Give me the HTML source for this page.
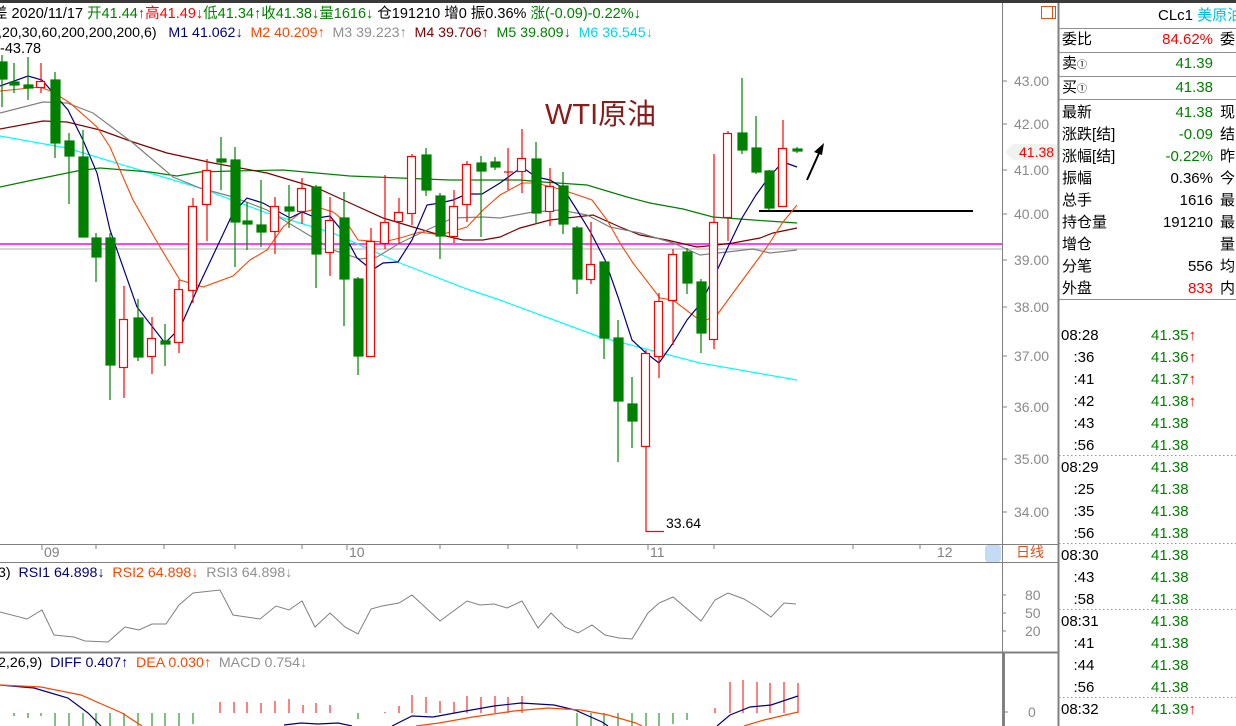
<!DOCTYPE html>
<html><head><meta charset="utf-8"><style>
body{margin:0;width:1236px;height:726px;overflow:hidden;background:#fff;font-family:"Liberation Sans","Noto Sans CJK SC",sans-serif;position:relative}
.t{position:absolute;white-space:nowrap;font-size:13px;line-height:15px}
.h{font-size:14.5px;line-height:16px}
.r{position:absolute;font-size:15px;line-height:18px;white-space:nowrap}
.g{color:#008000}.rd{color:#f00}.k{color:#000}
.ax{position:absolute;font-size:14px;color:#8a8a8a;left:1014px}
</style></head><body>
<svg width="1236" height="726" style="position:absolute;left:0;top:0" xmlns="http://www.w3.org/2000/svg">
<rect x="0" y="0" width="1236" height="3" fill="#3a3a3a"/>
<line x1="1002.5" y1="3" x2="1002.5" y2="726" stroke="#808080"/>
<line x1="1058.5" y1="3" x2="1058.5" y2="726" stroke="#808080" stroke-width="2"/>
<line x1="0" y1="544.5" x2="1058" y2="544.5" stroke="#808080"/>
<line x1="0" y1="562.5" x2="1058" y2="562.5" stroke="#808080"/>
<line x1="0" y1="652.5" x2="1058" y2="652.5" stroke="#808080" stroke-width="2"/>
<line x1="1004" y1="653" x2="1004" y2="726" stroke="#808080" stroke-width="2"/>
<g stroke="#909090"><line x1="1059" y1="28.5" x2="1236" y2="28.5"/><line x1="1059" y1="52.5" x2="1236" y2="52.5"/><line x1="1059" y1="76.5" x2="1236" y2="76.5"/><line x1="1059" y1="99.5" x2="1236" y2="99.5"/><line x1="1059" y1="299.5" x2="1236" y2="299.5"/></g>
<g stroke="#999" stroke-dasharray="1.5,2.5"><line x1="1059" y1="455.5" x2="1236" y2="455.5"/><line x1="1059" y1="543.5" x2="1236" y2="543.5"/><line x1="1059" y1="609.5" x2="1236" y2="609.5"/><line x1="1059" y1="697.5" x2="1236" y2="697.5"/></g>
<rect x="1041.5" y="6.5" width="14" height="12" fill="none" stroke="#e0501a"/><line x1="1052.5" y1="6" x2="1052.5" y2="19" stroke="#e0501a"/>
<g stroke="#808080"><line x1="1003" y1="81" x2="1007" y2="81"/><line x1="1003" y1="124" x2="1007" y2="124"/><line x1="1003" y1="170" x2="1007" y2="170"/><line x1="1003" y1="214" x2="1007" y2="214"/><line x1="1003" y1="260" x2="1007" y2="260"/><line x1="1003" y1="307" x2="1007" y2="307"/><line x1="1003" y1="356" x2="1007" y2="356"/><line x1="1003" y1="407" x2="1007" y2="407"/><line x1="1003" y1="459" x2="1007" y2="459"/><line x1="1003" y1="512" x2="1007" y2="512"/>
<line x1="1003" y1="595" x2="1006" y2="595"/><line x1="1003" y1="613" x2="1006" y2="613"/><line x1="1003" y1="631" x2="1006" y2="631"/><line x1="1005" y1="712" x2="1008" y2="712"/>
<line x1="42" y1="545" x2="42" y2="550"/><line x1="96" y1="545" x2="96" y2="549"/><line x1="164" y1="545" x2="164" y2="549"/><line x1="235" y1="545" x2="235" y2="549"/><line x1="302" y1="545" x2="302" y2="549"/><line x1="347" y1="545" x2="347" y2="550"/><line x1="440" y1="545" x2="440" y2="549"/><line x1="508" y1="545" x2="508" y2="549"/><line x1="577" y1="545" x2="577" y2="549"/><line x1="648" y1="545" x2="648" y2="550"/><line x1="714" y1="545" x2="714" y2="549"/><line x1="853" y1="545" x2="853" y2="549"/><line x1="920" y1="545" x2="920" y2="549"/></g>
<rect x="985" y="545" width="16" height="17" rx="3" fill="#c5dbf5"/>
<polygon points="1005,152 1013,144 1057,144 1057,160 1013,160" fill="#eef3ee"/>
<line x1="0" y1="249" x2="1002" y2="249" stroke="#c8c8c8" stroke-width="1.5"/>
<line x1="0" y1="244" x2="1002" y2="244" stroke="#ff00ff" stroke-width="1.5"/>
<line x1="759" y1="211" x2="973" y2="211" stroke="#000" stroke-width="2"/>
<line x1="807" y1="180" x2="820" y2="151" stroke="#000" stroke-width="2"/><polygon points="824,143 814,152 822,155" fill="#000"/>
<polyline fill="none" stroke="#00ffff" stroke-width="1.2" points="0,136 67,148 133,168 200,188 267,213 333,233 400,263 467,289 500,300 600,337 700,363 797,380"/>
<polyline fill="none" stroke="#008000" stroke-width="1.2" points="0,187 33,180 77,171 100,168 150,172 177,176 200,172 233,171 283,170 350,176 400,178 450,180 500,180 520,180 543,182 587,185 627,197 650,203 683,209 713,217 753,220 797,223"/>
<polyline fill="none" stroke="#800000" stroke-width="1.2" points="0,129 43,121 67,122 100,130 133,142 167,153 213,163 267,173 317,188 350,203 383,218 433,233 463,240 483,240 500,237 520,228 550,220 593,215 620,227 640,235 667,240 697,247 717,245 733,243 760,238 773,233 797,228"/>
<polyline fill="none" stroke="#808080" stroke-width="1.2" points="0,113 43,102 67,103 93,113 133,143 173,177 200,188 233,197 267,210 317,240 333,250 360,259 377,257 400,243 427,230 453,218 483,217 500,218 533,212 560,210 587,215 610,227 640,233 673,243 700,255 727,252 753,249 770,253 797,250"/>
<polyline fill="none" stroke="#ff4500" stroke-width="1.1" points="0,91 40,87 53,92 70,103 97,127 110,147 133,200 160,247 180,280 203,287 233,276 250,260 267,250 283,227 300,213 320,208 333,212 347,223 358,240 383,242 400,238 420,232 440,235 467,227 483,210 500,195 522,183 536,183 563,190 592,200 607,220 620,243 633,263 660,298 673,300 702,322 717,315 733,293 750,270 767,247 783,222 797,205"/>
<polyline fill="none" stroke="#000080" stroke-width="1.2" points="0,86 28,76 42,80 68,110 83,140 97,173 110,230 137,307 165,343 180,328 200,283 217,247 233,213 247,198 263,203 290,218 302,212 317,218 330,216 343,232 357,258 372,270 383,263 398,262 412,240 427,205 440,203 453,200 467,194 482,194 500,183 522,167 536,177 550,180 563,188 577,210 591,233 605,260 618,297 632,340 646,353 659,363 673,343 687,320 701,303 714,277 728,247 742,218 756,195 769,177 783,162 797,167"/>
<g stroke-width="1.2">
<g stroke="#008000" fill="#008000">
<line x1="2" y1="55" x2="2" y2="107"/><rect x="-2" y="62" width="9" height="17"/>
<line x1="14" y1="63" x2="14" y2="93"/><rect x="10" y="82" width="9" height="3"/>
<line x1="28" y1="57" x2="28" y2="100"/><rect x="24" y="85" width="9" height="3"/>
<line x1="55" y1="72" x2="55" y2="158"/><rect x="51" y="80" width="9" height="63"/>
<line x1="69" y1="133" x2="69" y2="204"/><rect x="65" y="141" width="9" height="15"/>
<line x1="83" y1="130" x2="83" y2="237"/><rect x="79" y="157" width="9" height="80"/>
<line x1="96" y1="233" x2="96" y2="282"/><rect x="92" y="238" width="9" height="19"/>
<line x1="110" y1="233" x2="110" y2="400"/><rect x="106" y="238" width="9" height="127"/>
<line x1="138" y1="299" x2="138" y2="361"/><rect x="134" y="318" width="9" height="39"/>
<line x1="165" y1="324" x2="165" y2="366"/><rect x="161" y="341" width="9" height="3"/>
<line x1="221" y1="137" x2="221" y2="190"/><rect x="217" y="159" width="9" height="3"/>
<line x1="235" y1="147" x2="235" y2="267"/><rect x="231" y="160" width="9" height="62"/>
<line x1="247" y1="202" x2="247" y2="250"/><rect x="243" y="221" width="9" height="3"/>
<line x1="261" y1="180" x2="261" y2="247"/><rect x="257" y="225" width="9" height="7"/>
<line x1="289" y1="185" x2="289" y2="228"/><rect x="285" y="207" width="9" height="4"/>
<line x1="316" y1="185" x2="316" y2="288"/><rect x="312" y="187" width="9" height="67"/>
<line x1="344" y1="192" x2="344" y2="326"/><rect x="340" y="218" width="9" height="61"/>
<line x1="358" y1="277" x2="358" y2="375"/><rect x="354" y="279" width="9" height="77"/>
<line x1="426" y1="148" x2="426" y2="196"/><rect x="422" y="155" width="9" height="35"/>
<line x1="440" y1="193" x2="440" y2="259"/><rect x="436" y="196" width="9" height="40"/>
<line x1="481" y1="156" x2="481" y2="237"/><rect x="477" y="163" width="9" height="8"/>
<line x1="495" y1="157" x2="495" y2="170"/><rect x="491" y="162" width="9" height="5"/>
<line x1="536" y1="142" x2="536" y2="224"/><rect x="532" y="159" width="9" height="54"/>
<line x1="563" y1="172" x2="563" y2="234"/><rect x="559" y="186" width="9" height="38"/>
<line x1="577" y1="226" x2="577" y2="294"/><rect x="573" y="228" width="9" height="51"/>
<line x1="604" y1="262" x2="604" y2="359"/><rect x="600" y="262" width="9" height="76"/>
<line x1="618" y1="320" x2="618" y2="462"/><rect x="614" y="338" width="9" height="63"/>
<line x1="632" y1="377" x2="632" y2="448"/><rect x="628" y="404" width="9" height="17"/>
<line x1="687" y1="248" x2="687" y2="294"/><rect x="683" y="252" width="9" height="31"/>
<line x1="701" y1="279" x2="701" y2="353"/><rect x="697" y="282" width="9" height="51"/>
<line x1="742" y1="78" x2="742" y2="154"/><rect x="738" y="133" width="9" height="17"/>
<line x1="756" y1="116" x2="756" y2="174"/><rect x="752" y="148" width="9" height="24"/>
<line x1="769" y1="170" x2="769" y2="210"/><rect x="765" y="171" width="9" height="37"/>
<line x1="797" y1="147" x2="797" y2="153"/><rect x="793" y="149" width="9" height="2"/>
</g>
<g stroke="#ff0000" fill="#fff">
<line x1="41" y1="63" x2="41" y2="93"/><rect x="36.5" y="81.5" width="8" height="6"/>
<line x1="124" y1="286" x2="124" y2="398"/><rect x="119.5" y="319.5" width="8" height="48"/>
<line x1="152" y1="317" x2="152" y2="374"/><rect x="147.5" y="338.5" width="8" height="18"/>
<line x1="179" y1="280" x2="179" y2="353"/><rect x="174.5" y="289.5" width="8" height="53"/>
<line x1="193" y1="198" x2="193" y2="303"/><rect x="188.5" y="206.5" width="8" height="84"/>
<line x1="207" y1="159" x2="207" y2="241"/><rect x="202.5" y="170.5" width="8" height="34"/>
<line x1="275" y1="197" x2="275" y2="254"/><rect x="270.5" y="206.5" width="8" height="25"/>
<line x1="302" y1="178" x2="302" y2="224"/><rect x="297.5" y="188.5" width="8" height="23"/>
<line x1="330" y1="197" x2="330" y2="276"/><rect x="325.5" y="220.5" width="8" height="32"/>
<line x1="371" y1="228" x2="371" y2="356"/><rect x="366.5" y="241.5" width="8" height="115"/>
<line x1="385" y1="175" x2="385" y2="249"/><rect x="380.5" y="222.5" width="8" height="21"/>
<line x1="399" y1="198" x2="399" y2="244"/><rect x="394.5" y="212.5" width="8" height="9"/>
<line x1="412" y1="154" x2="412" y2="225"/><rect x="407.5" y="156.5" width="8" height="57"/>
<line x1="454" y1="190" x2="454" y2="243"/><rect x="449.5" y="206.5" width="8" height="30"/>
<line x1="467" y1="161" x2="467" y2="222"/><rect x="462.5" y="164.5" width="8" height="40"/>
<line x1="508" y1="148" x2="508" y2="190"/><line x1="504" y1="172" x2="513" y2="172"/>
<line x1="522" y1="129" x2="522" y2="193"/><rect x="517.5" y="158.5" width="8" height="13"/>
<line x1="550" y1="168" x2="550" y2="226"/><rect x="545.5" y="186.5" width="8" height="25"/>
<line x1="591" y1="222" x2="591" y2="284"/><rect x="586.5" y="264.5" width="8" height="15"/>
<line x1="646" y1="350" x2="646" y2="532"/><rect x="641.5" y="353.5" width="8" height="93"/>
<line x1="646" y1="531.5" x2="664" y2="531.5"/>
<line x1="659" y1="293" x2="659" y2="378"/><rect x="654.5" y="301.5" width="8" height="55"/>
<line x1="673" y1="249" x2="673" y2="345"/><rect x="668.5" y="254.5" width="8" height="46"/>
<line x1="714" y1="154" x2="714" y2="349"/><rect x="709.5" y="222.5" width="8" height="117"/>
<line x1="728" y1="131" x2="728" y2="241"/><rect x="723.5" y="133.5" width="8" height="84"/>
<line x1="783" y1="120" x2="783" y2="207"/><rect x="778.5" y="148.5" width="8" height="58"/>
</g></g>
<polyline fill="none" stroke="#808080" points="0,612 27,619 42,610 54,635 74,637 85,641 108,642 125,627 139,630 152,624 166,624 179,605 193,593 220,590 233,615 260,619 276,606 289,610 302,601 315,627 330,613 345,627 358,634 371,609 382,606 399,603 412,595 440,621 467,601 480,605 494,604 507,608 522,601 538,628 551,613 565,627 578,633 592,625 605,635 619,638 632,639 648,613 659,603 673,597 686,608 701,621 715,600 728,593 744,599 757,607 771,617 784,603 796,604"/>
<g stroke="#008000"><line x1="14" y1="713" x2="14" y2="716"/><line x1="28" y1="713" x2="28" y2="718"/><line x1="41" y1="713" x2="41" y2="716"/><line x1="55" y1="713" x2="55" y2="726"/><line x1="69" y1="713" x2="69" y2="726"/><line x1="83" y1="713" x2="83" y2="726"/><line x1="96" y1="713" x2="96" y2="726"/><line x1="110" y1="713" x2="110" y2="726"/><line x1="124" y1="713" x2="124" y2="726"/><line x1="138" y1="713" x2="138" y2="726"/><line x1="152" y1="713" x2="152" y2="726"/><line x1="165" y1="713" x2="165" y2="726"/><line x1="179" y1="713" x2="179" y2="726"/><line x1="193" y1="713" x2="193" y2="724"/><line x1="358" y1="713" x2="358" y2="719"/>
<line x1="577" y1="713" x2="577" y2="726"/><line x1="591" y1="713" x2="591" y2="726"/><line x1="604" y1="713" x2="604" y2="726"/><line x1="618" y1="713" x2="618" y2="726"/><line x1="632" y1="713" x2="632" y2="726"/><line x1="646" y1="713" x2="646" y2="726"/><line x1="659" y1="713" x2="659" y2="726"/><line x1="673" y1="713" x2="673" y2="724"/><line x1="687" y1="713" x2="687" y2="720"/></g>
<g stroke="#ff0000"><line x1="220" y1="713" x2="220" y2="702"/><line x1="234" y1="713" x2="234" y2="702"/><line x1="247" y1="713" x2="247" y2="702"/><line x1="261" y1="713" x2="261" y2="703"/><line x1="275" y1="713" x2="275" y2="701"/><line x1="289" y1="713" x2="289" y2="699"/><line x1="303" y1="713" x2="303" y2="705"/><line x1="316" y1="713" x2="316" y2="703"/><line x1="330" y1="713" x2="330" y2="705"/>
<line x1="385" y1="713" x2="385" y2="712"/><line x1="399" y1="713" x2="399" y2="706"/><line x1="412" y1="713" x2="412" y2="695"/><line x1="426" y1="713" x2="426" y2="697"/><line x1="440" y1="713" x2="440" y2="701"/><line x1="454" y1="713" x2="454" y2="702"/><line x1="467" y1="713" x2="467" y2="696"/><line x1="481" y1="713" x2="481" y2="697"/><line x1="495" y1="713" x2="495" y2="696"/><line x1="508" y1="713" x2="508" y2="697"/><line x1="522" y1="713" x2="522" y2="696"/><line x1="715" y1="713" x2="715" y2="708"/><line x1="730" y1="713" x2="730" y2="682"/><line x1="743" y1="713" x2="743" y2="680"/><line x1="757" y1="713" x2="757" y2="682"/><line x1="770" y1="713" x2="770" y2="683"/><line x1="784" y1="713" x2="784" y2="682"/><line x1="798" y1="713" x2="798" y2="683"/></g>
<polyline fill="none" stroke="#000080" stroke-width="1.2" points="0,685 34,688 68,698 88,713 101,726"/>
<polyline fill="none" stroke="#000080" stroke-width="1.2" points="284,725 301,723 318,724 338,723 352,726"/>
<polyline fill="none" stroke="#000080" stroke-width="1.2" points="392,726 412,716 433,717 460,712 494,706 521,703 554,705 575,710 602,722 608,726"/>
<polyline fill="none" stroke="#000080" stroke-width="1.2" points="717,726 730,715 750,707 771,705 798,696"/>
<polyline fill="none" stroke="#ff4500" stroke-width="1.2" points="0,685 41,687 81,695 122,713 142,726"/>
<polyline fill="none" stroke="#ff4500" stroke-width="1.2" points="416,726 439,723 473,717 514,711 548,708 581,710 608,715 636,723 642,726"/>
<polyline fill="none" stroke="#ff4500" stroke-width="1.2" points="744,726 764,720 798,712"/>
</svg>

<div class="t h" style="left:-7px;top:6px"><span class="k">差 2020/11/17 </span><span class="g">开41.44↑</span><span class="rd">高41.49↓</span><span class="g">低41.34↑</span><span class="g">收41.38↓</span><span class="g">量1616↓</span><span class="k"> 仓191210 增0 振0.36% </span><span class="g">涨(-0.09)-0.22%↓</span></div>
<div class="t h" style="left:-2px;top:25px;font-size:14.2px"><span class="k">,20,30,60,200,200,200,6)</span>&nbsp;&nbsp;&nbsp;<span style="color:#000080">M1 41.062↓</span>&nbsp;&nbsp;<span style="color:#ff4500">M2 40.209↑</span>&nbsp;&nbsp;<span style="color:#909090">M3 39.223↑</span>&nbsp;&nbsp;<span style="color:#800000">M4 39.706↑</span>&nbsp;&nbsp;<span style="color:#008000">M5 39.809↓</span>&nbsp;&nbsp;<span style="color:#00d8e8">M6 36.545↓</span></div>
<div class="t k h" style="left:0;top:41px">-43.78</div>
<div class="t" style="left:545px;top:98px;font-size:29px;line-height:34px;color:#8b1a1a">WTI原油</div>
<div class="t k" style="left:666px;top:516px;font-size:14px">33.64</div>

<div class="ax" style="top:73px">43.00</div><div class="ax" style="top:116px">42.00</div><div class="ax" style="top:162px">41.00</div><div class="ax" style="top:206px">40.00</div><div class="ax" style="top:252px">39.00</div><div class="ax" style="top:299px">38.00</div><div class="ax" style="top:348px">37.00</div><div class="ax" style="top:399px">36.00</div><div class="ax" style="top:451px">35.00</div><div class="ax" style="top:504px">34.00</div>
<div class="t rd" style="left:1019px;top:145px;font-size:14px">41.38</div>

<div class="t" style="left:44px;top:545px;color:#808080;font-size:14px">09</div><div class="t" style="left:349px;top:545px;color:#808080;font-size:14px">10</div><div class="t" style="left:650px;top:545px;color:#808080;font-size:14px">11</div><div class="t" style="left:937px;top:545px;color:#808080;font-size:14px">12</div>
<div class="t" style="left:1016px;top:545px;color:#e0501a;font-size:14px">日线</div>
<div class="t" style="left:-2px;top:566px;font-size:14.2px"><span class="k">3)</span>&nbsp;&nbsp;<span style="color:#000080">RSI1 64.898↓</span>&nbsp;&nbsp;<span style="color:#ff4500">RSI2 64.898↓</span>&nbsp;&nbsp;<span style="color:#909090">RSI3 64.898↓</span></div>
<div class="ax" style="left:1025px;top:587px">80</div><div class="ax" style="left:1025px;top:605px">50</div><div class="ax" style="left:1025px;top:623px">20</div><div class="ax" style="left:1028px;top:704px">0</div>
<div class="t" style="left:-2px;top:656px;font-size:14.2px"><span class="k">2,26,9)</span>&nbsp;&nbsp;<span style="color:#000080">DIFF 0.407↑</span>&nbsp;&nbsp;<span style="color:#ff4500">DEA 0.030↑</span>&nbsp;&nbsp;<span style="color:#909090">MACD 0.754↓</span></div>

<div class="r k" style="left:1158px;top:7px">CLc1 <span style="color:#00c0e0">美原油</span></div>
<div class="r k" style="left:1062px;top:31px">委比</div><div class="r rd" style="left:1130px;top:31px;width:83px;text-align:right">84.62%</div><div class="r k" style="left:1220px;top:31px">委</div>
<div class="r k" style="left:1062px;top:55px">卖<span style="font-size:10px">①</span></div><div class="r g" style="left:1130px;top:55px;width:83px;text-align:right">41.39</div>
<div class="r k" style="left:1062px;top:79px">买<span style="font-size:10px">①</span></div><div class="r g" style="left:1130px;top:79px;width:83px;text-align:right">41.38</div>
<div class="r k" style="left:1062px;top:102px;line-height:22px">最新<br>涨跌[结]<br>涨幅[结]<br>振幅<br>总手<br>持仓量<br>增仓<br>分笔<br>外盘</div>
<div class="r" style="left:1110px;top:102px;width:103px;text-align:right;line-height:22px"><span class="g">41.38</span><br><span class="g">-0.09</span><br><span class="g">-0.22%</span><br>0.36%<br>1616<br>191210<br>&nbsp;<br>556<br><span class="rd">833</span></div>
<div class="r k" style="left:1220px;top:102px;line-height:22px">现<br>结<br>昨<br>今<br>最<br>最<br>量<br>均<br>内</div>
<div class="r k" style="left:1061px;top:325px;line-height:22px">08:28<br>&nbsp;&nbsp;&nbsp;:36<br>&nbsp;&nbsp;&nbsp;:41<br>&nbsp;&nbsp;&nbsp;:42<br>&nbsp;&nbsp;&nbsp;:43<br>&nbsp;&nbsp;&nbsp;:56<br>08:29<br>&nbsp;&nbsp;&nbsp;:25<br>&nbsp;&nbsp;&nbsp;:35<br>&nbsp;&nbsp;&nbsp;:56<br>08:30<br>&nbsp;&nbsp;&nbsp;:43<br>&nbsp;&nbsp;&nbsp;:58<br>08:31<br>&nbsp;&nbsp;&nbsp;:41<br>&nbsp;&nbsp;&nbsp;:44<br>&nbsp;&nbsp;&nbsp;:56<br>08:32</div>
<div class="r g" style="left:1151px;top:325px;line-height:22px">41.35<span class="rd">↑</span><br>41.36<span class="rd">↑</span><br>41.37<span class="rd">↑</span><br>41.38<span class="rd">↑</span><br>41.38<br>41.38<br>41.38<br>41.38<br>41.38<br>41.38<br>41.38<br>41.38<br>41.38<br>41.38<br>41.38<br>41.38<br>41.38<br>41.39<span class="rd">↑</span></div>
</body></html>
